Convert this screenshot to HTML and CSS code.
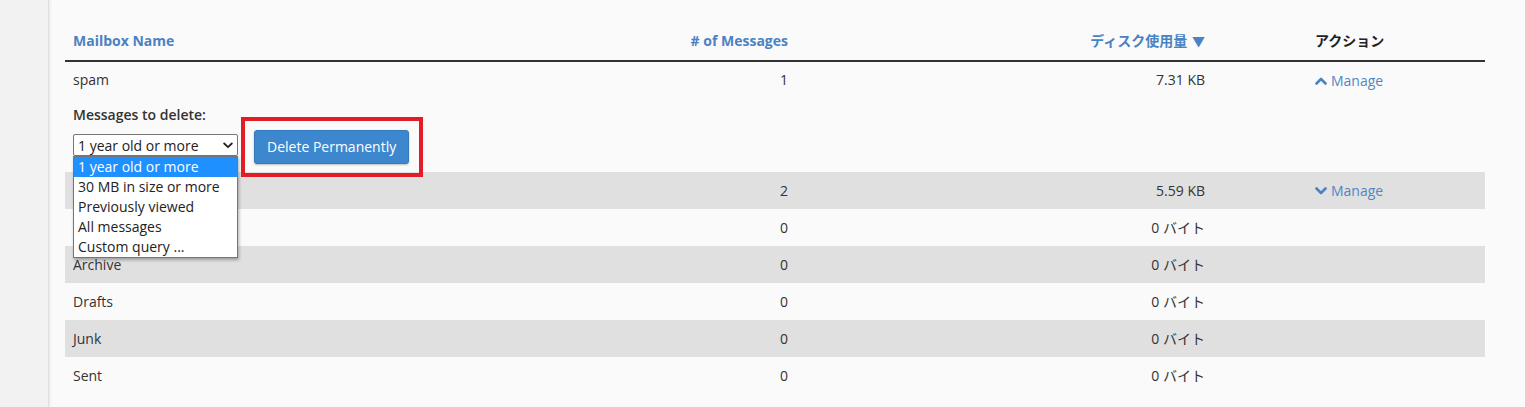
FILE: index.html
```html
<!DOCTYPE html>
<html lang="ja">
<head>
<meta charset="utf-8">
<title>Mailboxes</title>
<link rel="stylesheet" href="styles.css">
</head>
<body>
<div class="page">
  <aside class="sidebar"></aside>
  <main class="main">
    <table class="mailboxes">
      <colgroup>
        <col class="c-name"><col class="c-count"><col class="c-size"><col class="c-action">
      </colgroup>
      <thead>
        <tr>
          <th class="name"><a href="#">Mailbox Name</a></th>
          <th class="num"><a href="#"># of Messages</a></th>
          <th class="size"><a href="#">ディスク使用量 <span class="caret">▼</span></a></th>
          <th class="action">アクション</th>
        </tr>
      </thead>
      <tbody>
        <tr class="row">
          <td>spam</td>
          <td class="num">1</td>
          <td class="size">7.31 KB</td>
          <td class="action"><a class="manage" href="#"><svg class="chev" viewBox="0 0 12 8" width="12" height="8"><polyline points="1.5,6.5 6,2 10.5,6.5" fill="none" stroke="currentColor" stroke-width="2.6" stroke-linecap="round" stroke-linejoin="round"/></svg>Manage</a></td>
        </tr>
        <tr class="detail">
          <td colspan="4">
            <div class="detail-label">Messages to delete:</div>
            <div class="controls">
              <div class="select-wrap">
                <select class="select">
                  <option>1 year old or more</option>
                  <option>30 MB in size or more</option>
                  <option>Previously viewed</option>
                  <option>All messages</option>
                  <option>Custom query ...</option>
                </select>
                <svg class="select-arrow" viewBox="0 0 10 7" width="10" height="7"><polyline points="1.2,1.5 5,5.2 8.8,1.5" fill="none" stroke="#222" stroke-width="1.8" stroke-linecap="round" stroke-linejoin="round"/></svg>
                <ul class="listbox">
                  <li class="selected">1 year old or more</li>
                  <li>30 MB in size or more</li>
                  <li>Previously viewed</li>
                  <li>All messages</li>
                  <li>Custom query ...</li>
                </ul>
              </div>
              <div class="btn-wrap">
                <button class="btn" type="button">Delete Permanently</button>
                <span class="highlight"></span>
              </div>
            </div>
          </td>
        </tr>
        <tr class="row stripe">
          <td>INBOX</td>
          <td class="num">2</td>
          <td class="size">5.59 KB</td>
          <td class="action"><a class="manage" href="#"><svg class="chev" viewBox="0 0 12 8" width="12" height="8"><polyline points="1.5,1.5 6,6 10.5,1.5" fill="none" stroke="currentColor" stroke-width="2.6" stroke-linecap="round" stroke-linejoin="round"/></svg>Manage</a></td>
        </tr>
        <tr class="row">
          <td>Trash</td>
          <td class="num">0</td>
          <td class="size">0 バイト</td>
          <td class="action"></td>
        </tr>
        <tr class="row stripe">
          <td>Archive</td>
          <td class="num">0</td>
          <td class="size">0 バイト</td>
          <td class="action"></td>
        </tr>
        <tr class="row">
          <td>Drafts</td>
          <td class="num">0</td>
          <td class="size">0 バイト</td>
          <td class="action"></td>
        </tr>
        <tr class="row stripe">
          <td>Junk</td>
          <td class="num">0</td>
          <td class="size">0 バイト</td>
          <td class="action"></td>
        </tr>
        <tr class="row">
          <td>Sent</td>
          <td class="num">0</td>
          <td class="size">0 バイト</td>
          <td class="action"></td>
        </tr>
      </tbody>
    </table>
  </main>
</div>
</body>
</html>
```
FILE: styles.css
```css
html, body {
  margin: 0;
  padding: 0;
  height: 100%;
}

body {
  background: #fafafa;
  font-family: "Open Sans", "Noto Sans CJK JP", sans-serif;
  font-size: 14px;
  line-height: 20px;
  color: #333;
  overflow: hidden;
}

.page {
  display: flex;
  min-height: 407px;
}

.sidebar {
  flex: 0 0 48px;
  background: #f2f2f2;
  border-right: 1px solid #dedede;
  box-shadow: 1px 0 3px rgba(0, 0, 0, 0.08);
}

.main {
  flex: 1;
  padding: 23px 0 0 16px;
}

.mailboxes {
  width: 1420px;
  border-collapse: collapse;
  table-layout: fixed;
}

.c-name { width: 520px; }
.c-count { width: 211px; }
.c-size { width: 511px; }
.c-action { width: 178px; }

.mailboxes th {
  box-sizing: border-box;
  height: 38px;
  padding: 0 8px 9px;
  line-height: 20px;
  vertical-align: bottom;
  font-weight: 700;
  text-align: left;
  border-bottom: 2px solid #333;
  white-space: nowrap;
}

.mailboxes th a {
  color: #4a82c3;
  text-decoration: none;
}

.mailboxes th.action {
  color: #222;
  font-weight: 600;
}

.caret {
  font-size: 13px;
  margin-left: 1px;
}

.row td {
  box-sizing: border-box;
  height: 37px;
  padding: 0 8px;
  line-height: 20px;
  vertical-align: middle;
  white-space: nowrap;
}

.mailboxes .num {
  text-align: right;
}

.mailboxes .size {
  text-align: right;
  padding-right: 102px;
}

.stripe td {
  background: #e0e0e0;
}

.manage {
  display: inline-flex;
  align-items: center;
  gap: 4px;
  color: #5186c5;
  text-decoration: none;
}

.chev {
  display: block;
  color: #4a82c3;
}

.detail td {
  padding: 7px 8px 8px;
  line-height: 20px;
  vertical-align: top;
}

.detail-label {
  font-weight: 600;
  margin-bottom: 5px;
}

.controls {
  display: flex;
  align-items: flex-start;
  gap: 16px;
}

.select-wrap {
  position: relative;
  margin-top: 4px;
  width: 165px;
  height: 22px;
}

.select {
  -webkit-appearance: none;
  appearance: none;
  display: block;
  box-sizing: border-box;
  width: 165px;
  height: 22px;
  margin: 0;
  padding: 1px 20px 0 4px;
  border: 1px solid #767676;
  border-radius: 2px;
  background: #fff;
  font-family: "Open Sans", sans-serif;
  font-size: 14px;
  line-height: 20px;
  color: #222;
}

.select-arrow {
  position: absolute;
  right: 5px;
  top: 8px;
  pointer-events: none;
}

.listbox {
  position: absolute;
  z-index: 5;
  left: 0;
  top: 22px;
  box-sizing: border-box;
  width: 165px;
  margin: 0;
  padding: 0;
  list-style: none;
  background: #fff;
  border: 1px solid #767676;
  box-shadow: 1px 2px 3px rgba(0, 0, 0, 0.3);
  color: #222;
}

.listbox li {
  height: 20px;
  line-height: 20px;
  padding: 0 4px;
  white-space: nowrap;
}

.listbox li.selected {
  background: #1e90ff;
  color: #fff;
}

.btn-wrap {
  position: relative;
}

.btn {
  display: block;
  box-sizing: border-box;
  height: 34px;
  padding: 6px 12px;
  border: 1px solid #3479bd;
  border-radius: 3px;
  background: #3d87cf;
  color: #fff;
  font-family: "Open Sans", sans-serif;
  font-size: 14px;
  line-height: 20px;
  box-shadow: 0 1px 2px rgba(0, 0, 0, 0.25);
}

.highlight {
  position: absolute;
  z-index: 4;
  top: -13px;
  left: -13px;
  right: -14px;
  bottom: -13px;
  border: 4px solid #e21d25;
  pointer-events: none;
}
```
